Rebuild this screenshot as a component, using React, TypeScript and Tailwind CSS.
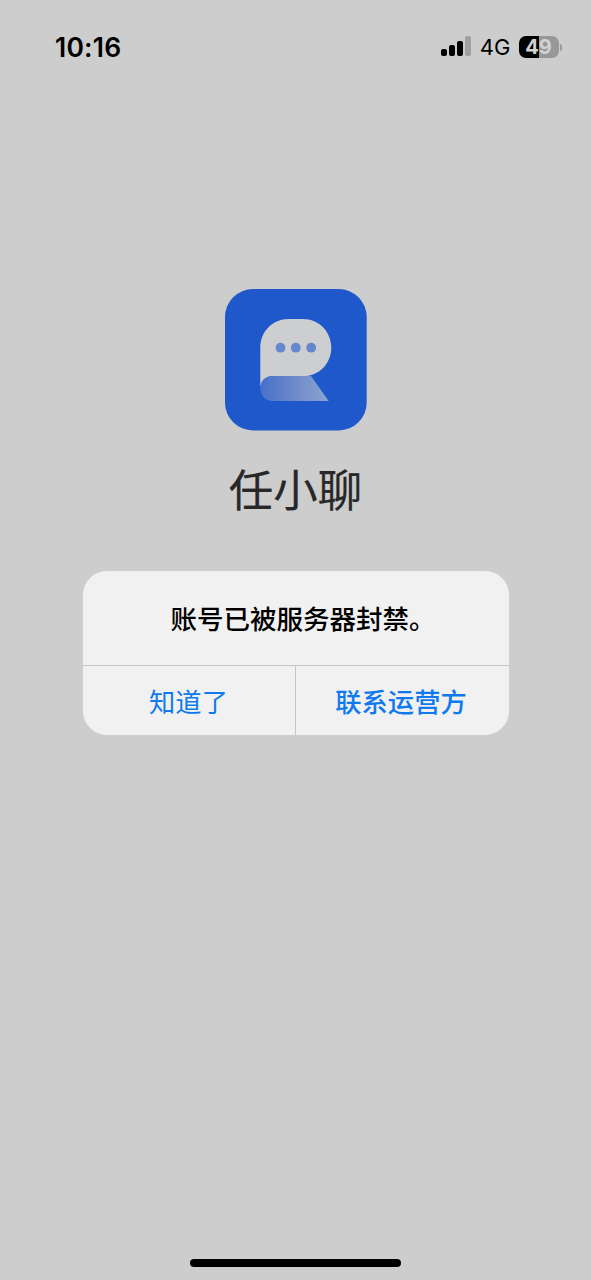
import { useState } from "react";

const BARS = ["h-[7px]", "h-[11px]", "h-[15px]"];

function StatusBar() {
  return (
    <div className="flex h-[94px] items-center justify-between pl-[55px] pr-[29px] font-['Inter',sans-serif] text-black">
      <span className="text-[26.500px] leading-[30px] font-semibold tracking-[0.2px]">10:16</span>
      <div className="flex items-center">
        <div className="mb-[2px] flex h-[20px] items-end gap-[2px]">
          {BARS.map((h) => (
            <span key={h} className={`w-[6px] rounded-[2px] bg-black ${h}`} />
          ))}
          <span className="h-[20px] w-[6px] rounded-[2px] bg-[#a0a0a0]" />
        </div>
        <span className="ml-[9px] text-[22px] leading-[30px]">4G</span>
        <div className="ml-[8px] flex h-[22px] w-[40px] items-center justify-center rounded-[7px] bg-[linear-gradient(to_right,#000_50%,#989898_50%)]">
          <span className="text-[20px] leading-[22px] font-bold text-[#d2d2d2]">49</span>
        </div>
        <span className="ml-[1px] h-[7px] w-[2.5px] rounded-r-full bg-[#9b9b9b]" />
      </div>
    </div>
  );
}

function AppLogo() {
  return (
    <svg width="142" height="142" viewBox="0 0 142 142" className="block">
      <defs>
        <linearGradient id="fold" x1="35" y1="0" x2="104" y2="0" gradientUnits="userSpaceOnUse">
          <stop offset="0" stopColor="#4770c8" />
          <stop offset="0.6" stopColor="#7590cc" />
          <stop offset="1" stopColor="#8ca2d0" />
        </linearGradient>
      </defs>
      <rect width="141.700" height="141.500" rx="28" fill="#1f58cb" />
      <path d="M35.300 100V59C35.300 42 48 30 63.500 30H78C94 30 106.300 42.700 106.300 58.500C106.300 74.700 94 87.200 78 87.200H47C40 87.200 35.300 92 35.300 100Z" fill="#cdcecf" />
      <path d="M47.500 87H86L103.700 112H47.500C40.500 112 35.300 106.700 35.300 99.500C35.300 92.200 40.500 87 47.500 87Z" fill="url(#fold)" />
      <g fill="#6588cd">
        <circle cx="55.500" cy="58.700" r="4.900" />
        <circle cx="70.800" cy="58.700" r="4.900" />
        <circle cx="86.200" cy="58.700" r="4.900" />
      </g>
    </svg>
  );
}

export default function App() {
  const [open, setOpen] = useState(true);

  return (
    <div className="flex h-[1280px] w-full flex-col bg-[#cdcdcd] font-['Noto_Sans_CJK_SC',sans-serif]">
      <StatusBar />
      <main className="flex flex-1 flex-col items-center pt-[195px]">
        <AppLogo />
        <h1 className="mt-[25px] text-[44.500px] leading-[64px] text-[#282828] [-webkit-text-stroke:0.200px_#282828]">
          任小聊
        </h1>
        {open && (
          <div className="mt-[51px] h-[164px] w-[426px] overflow-hidden rounded-[24px] bg-[#f1f1f1]">
            <p className="flex h-[94px] items-center justify-center pl-[15px] text-[26.500px] font-medium text-black">
              账号已被服务器封禁。
            </p>
            <div className="flex h-[70px] border-t border-[#c6c6c8] text-[26.300px] text-[#0f7aee]">
              <button onClick={() => setOpen(false)} className="w-[213px] border-r border-[#c6c6c8]">
                知道了
              </button>
              <button onClick={() => setOpen(false)} className="w-[213px] pr-[2px] font-medium">
                联系运营方
              </button>
            </div>
          </div>
        )}
      </main>
      <div className="mb-[13px] h-[8px] w-[211px] self-center rounded-full bg-black" />
    </div>
  );
}
